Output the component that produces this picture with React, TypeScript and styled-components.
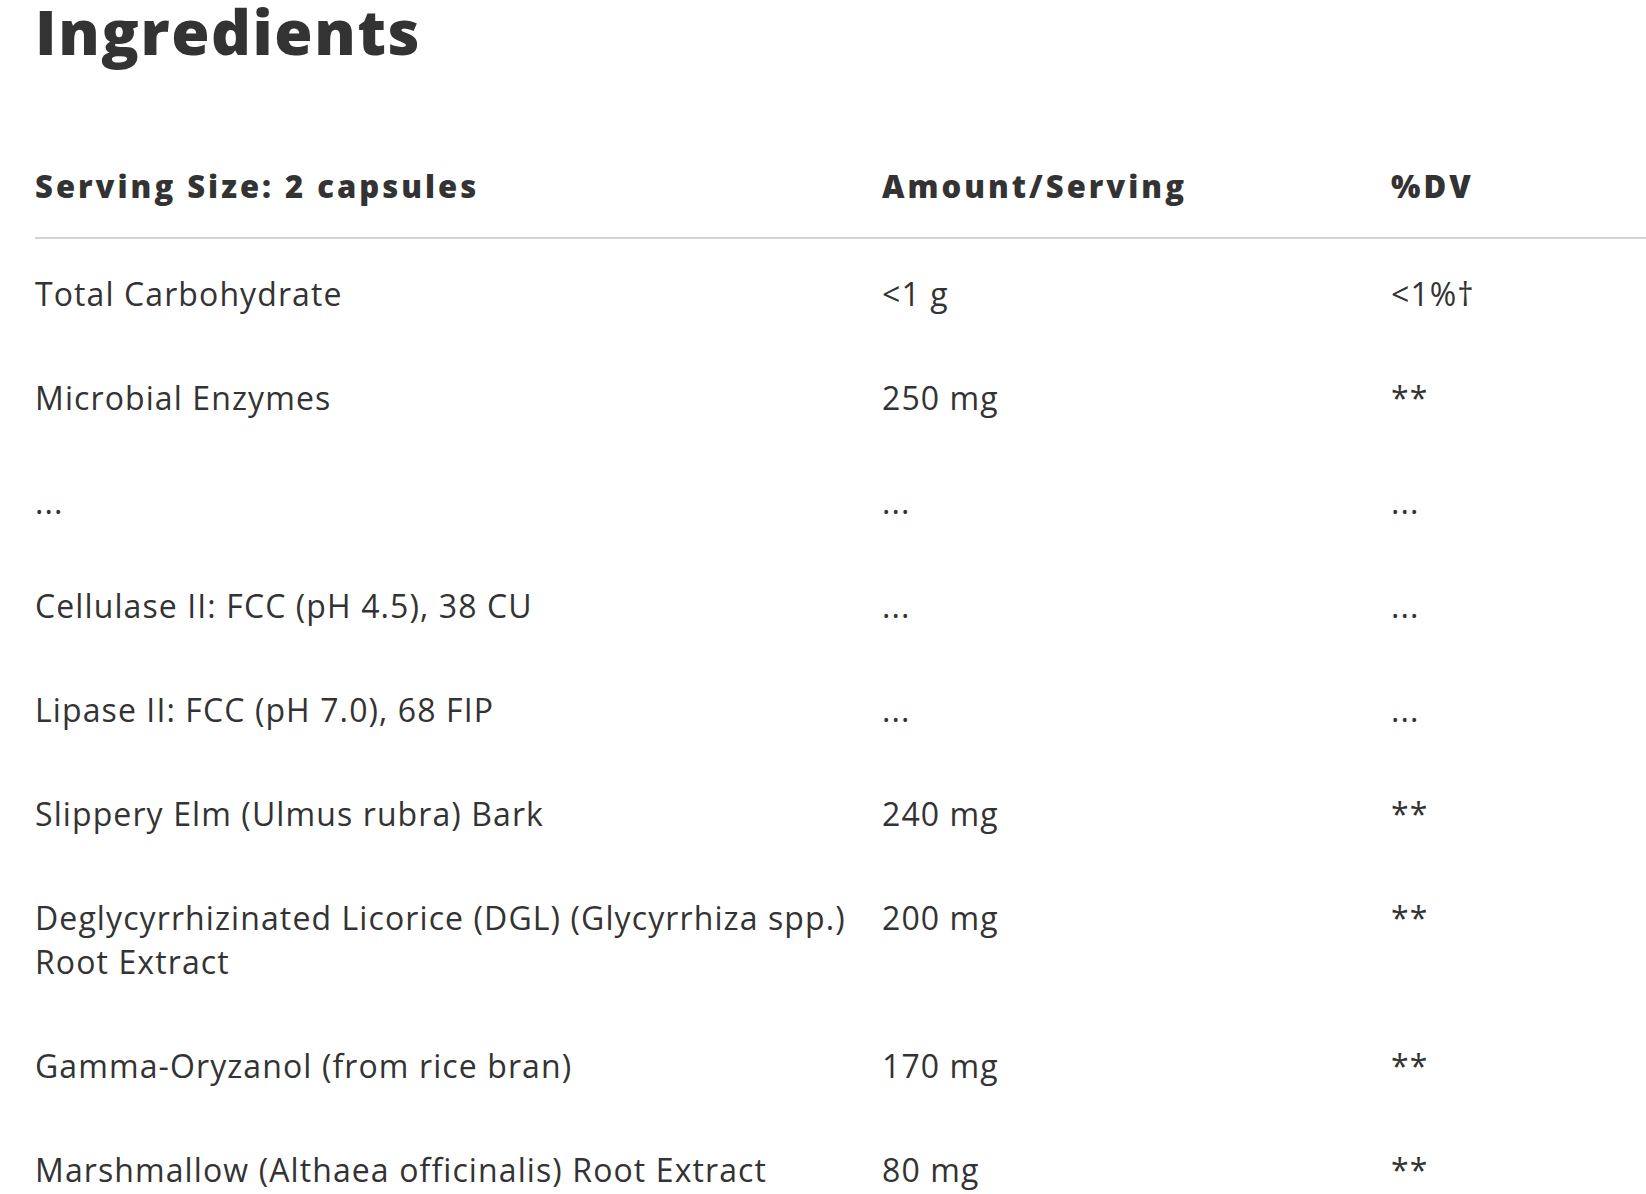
import styled, { createGlobalStyle } from 'styled-components';

const GlobalStyle = createGlobalStyle`
    html, body {
        margin: 0;
        padding: 0;
        background: #ffffff;
        overflow: hidden;
    }
    body {
        font-family: "Open Sans", "Liberation Sans", sans-serif;
        color: #333333;
    }
`;

type Ingredient = { name: string, amount: string, dv: string };

const ingredients: Ingredient[] = [
    { name: 'Total Carbohydrate', amount: '<1 g', dv: '<1%†' },
    { name: 'Microbial Enzymes', amount: '250 mg', dv: '**' },
    { name: '...', amount: '...', dv: '...' },
    { name: 'Cellulase II: FCC (pH 4.5), 38 CU', amount: '...', dv: '...' },
    { name: 'Lipase II: FCC (pH 7.0), 68 FIP', amount: '...', dv: '...' },
    { name: 'Slippery Elm (Ulmus rubra) Bark', amount: '240 mg', dv: '**' },
    { name: 'Deglycyrrhizinated Licorice (DGL) (Glycyrrhiza spp.) Root Extract', amount: '200 mg', dv: '**' },
    { name: 'Gamma-Oryzanol (from rice bran)', amount: '170 mg', dv: '**' },
    { name: 'Marshmallow (Althaea officinalis) Root Extract', amount: '80 mg', dv: '**' },
];

const App = () => {
    return (
        <Page>
            <GlobalStyle />
            <Title>Ingredients</Title>
            <Table>
                <HeadRow>
                    <HeadCell>Serving Size: 2 capsules</HeadCell>
                    <HeadCell>Amount/Serving</HeadCell>
                    <HeadCell>%DV</HeadCell>
                </HeadRow>
                {ingredients.map((item, i) => (
                    <Row key={i}>
                        <Cell>{item.name}</Cell>
                        <Cell>{item.amount}</Cell>
                        <Cell>{item.dv}</Cell>
                    </Row>
                ))}
            </Table>
        </Page>
    );
}
export default App;

const Page = styled.div`
    padding-left: 35px;
    width: 1611px;
`;

const Title = styled.h1`
    margin: 0;
    font-size: 62px;
    line-height: 62px;
    font-weight: 800;
    letter-spacing: 1.6px;
    color: #333333;
`;

const Table = styled.div`
    display: flex;
    flex-direction: column;
    margin-top: 104px;
`;

const HeadRow = styled.div`
    display: grid;
    grid-template-columns: 847px 509px 1fr;
    padding-bottom: 31px;
    border-bottom: 2px solid #d6d3cf;
`;

const HeadCell = styled.div`
    font-size: 31px;
    line-height: 40px;
    font-weight: 800;
    letter-spacing: 3px;
    color: #333333;
`;

const Row = styled.div`
    display: grid;
    grid-template-columns: 847px 509px 1fr;
    padding: 33px 0 27px;
`;

const Cell = styled.div`
    font-size: 32px;
    line-height: 44px;
    font-weight: 400;
    letter-spacing: 1.1px;
    color: #333333;
    padding-right: 16px;
`;
